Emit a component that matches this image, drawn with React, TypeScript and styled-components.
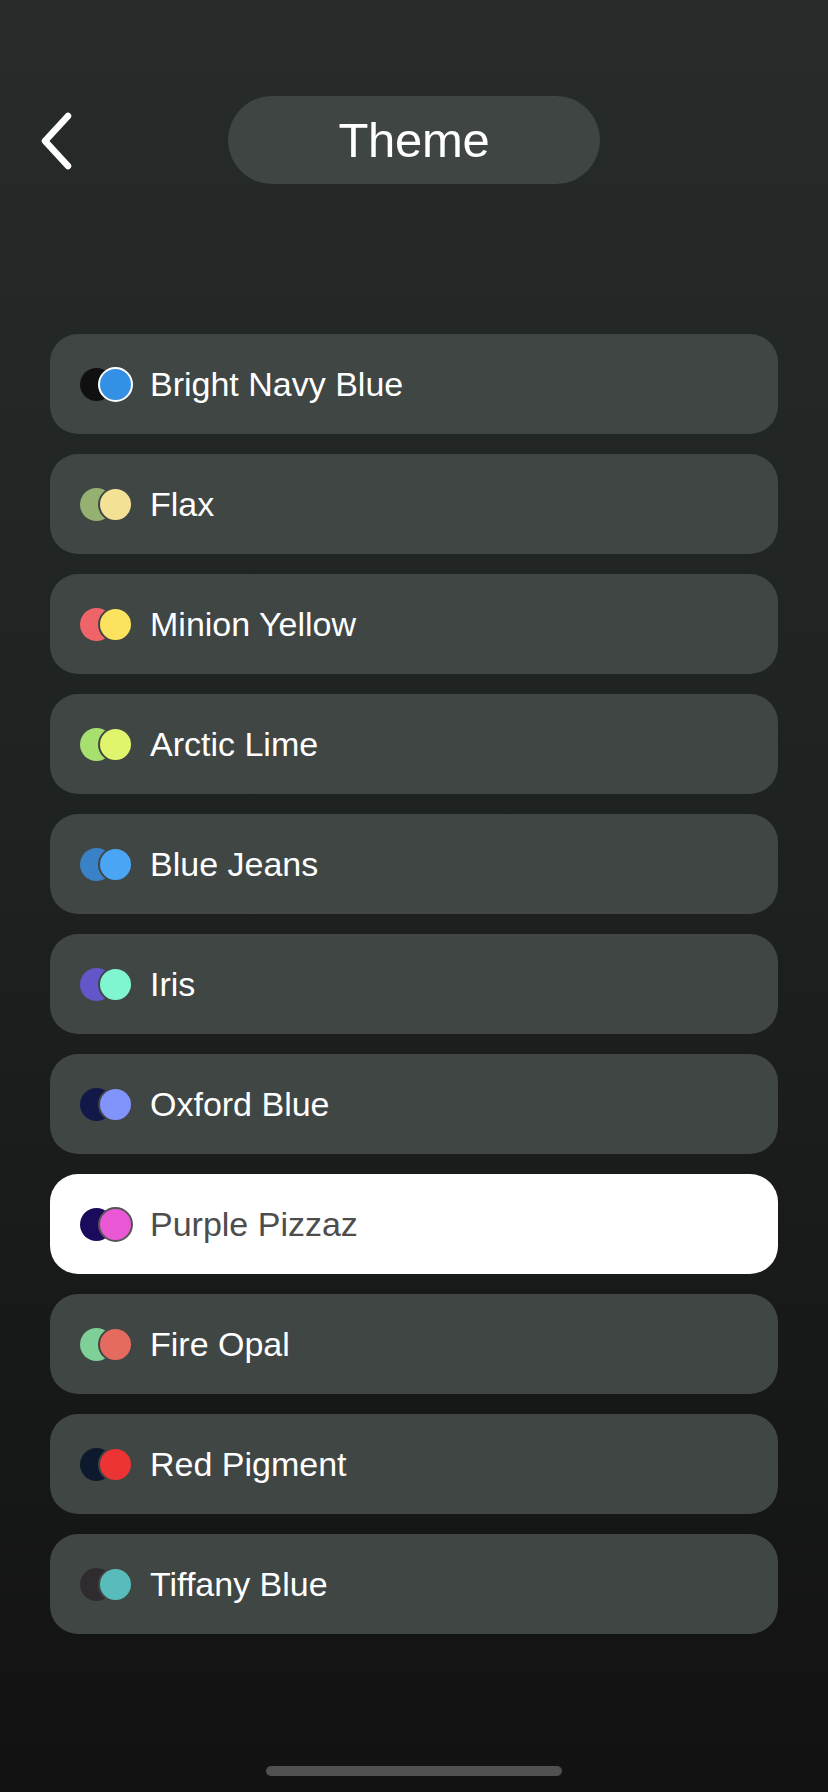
import React from "react";
import styled, { createGlobalStyle } from "styled-components";

const GlobalStyle = createGlobalStyle`
  html, body {
    margin: 0;
    padding: 0;
    background: #121212;
  }
  body {
    font-family: "Liberation Sans", Arial, sans-serif;
  }
`;

type Theme = { name: string; back: string; front: string; ring?: string };

const themes: Theme[] = [
  { name: "Bright Navy Blue", back: "#101010", front: "#3490e4", ring: "#ffffff" },
  { name: "Flax", back: "#95b172", front: "#f3e295" },
  { name: "Minion Yellow", back: "#ee6468", front: "#fbe25f" },
  { name: "Arctic Lime", back: "#a8e070", front: "#e0f46c" },
  { name: "Blue Jeans", back: "#3a82c8", front: "#4aa5f4" },
  { name: "Iris", back: "#6256c8", front: "#80f6d0" },
  { name: "Oxford Blue", back: "#121848", front: "#8194fb" },
  { name: "Purple Pizzaz", back: "#1c0a5c", front: "#ea58d6" },
  { name: "Fire Opal", back: "#7ecf98", front: "#e46b5e" },
  { name: "Red Pigment", back: "#0d192c", front: "#ec3434" },
  { name: "Tiffany Blue", back: "#302b2f", front: "#57bcba" },
];

const SELECTED = "Purple Pizzaz";

const Page = styled.div`
  min-height: 1792px;
  display: flex;
  flex-direction: column;
  background: linear-gradient(180deg, #272c2b 0%, #1e2221 45%, #121212 100%);
`;

const Header = styled.header`
  display: grid;
  grid-template-columns: 1fr auto 1fr;
  align-items: center;
  margin-top: 96px;
`;

const BackButton = styled.button`
  justify-self: start;
  margin-left: 36px;
  width: 40px;
  height: 60px;
  padding: 0;
  border: none;
  background: transparent;
  display: flex;
  align-items: center;
  justify-content: center;
  cursor: pointer;
`;

const TitlePill = styled.div`
  width: 372px;
  height: 88px;
  border-radius: 44px;
  background: #3f4543;
  display: flex;
  align-items: center;
  justify-content: center;
  color: #ffffff;
  font-size: 49px;
  letter-spacing: -0.3px;
`;

const List = styled.ul`
  list-style: none;
  margin: 150px 0 0;
  padding: 0 50px;
  display: flex;
  flex-direction: column;
  gap: 20px;
`;

const Row = styled.li<{ $selected: boolean }>`
  height: 100px;
  border-radius: 28px;
  background: ${(p) => (p.$selected ? "#ffffff" : "#404644")};
  display: flex;
  align-items: center;
  padding-left: 30px;
  gap: 17px;
  color: ${(p) => (p.$selected ? "#4d4d4d" : "#ffffff")};
  font-size: 34px;
  cursor: pointer;
`;

const Swatch = styled.div`
  display: flex;
  align-items: center;
`;

const BackDot = styled.span<{ $color: string }>`
  width: 33px;
  height: 33px;
  border-radius: 50%;
  background: ${(p) => p.$color};
`;

const FrontDot = styled.span<{ $color: string; $ring: string }>`
  width: 35px;
  height: 35px;
  box-sizing: border-box;
  margin-left: -15px;
  border-radius: 50%;
  background: ${(p) => p.$color};
  border: 2px solid ${(p) => p.$ring};
`;

const Label = styled.span`
  line-height: 1;
`;

const HomeBar = styled.div`
  width: 296px;
  height: 10px;
  border-radius: 5px;
  background: #505050;
  margin: auto auto 16px;
`;

export default function App() {
  return (
    <>
      <GlobalStyle />
      <Page>
        <Header>
          <BackButton aria-label="Back">
            <svg width="40" height="60" viewBox="0 0 40 60">
              <polyline
                points="32,6 9,31 32,56"
                fill="none"
                stroke="#ffffff"
                strokeWidth="6.5"
                strokeLinecap="round"
                strokeLinejoin="round"
              />
            </svg>
          </BackButton>
          <TitlePill>Theme</TitlePill>
          <div />
        </Header>
        <List>
          {themes.map((t) => {
            const selected = t.name === SELECTED;
            const ring = t.ring ?? (selected ? "#555555" : "#404644");
            return (
              <Row key={t.name} $selected={selected}>
                <Swatch>
                  <BackDot $color={t.back} />
                  <FrontDot $color={t.front} $ring={ring} />
                </Swatch>
                <Label>{t.name}</Label>
              </Row>
            );
          })}
        </List>
        <HomeBar />
      </Page>
    </>
  );
}
